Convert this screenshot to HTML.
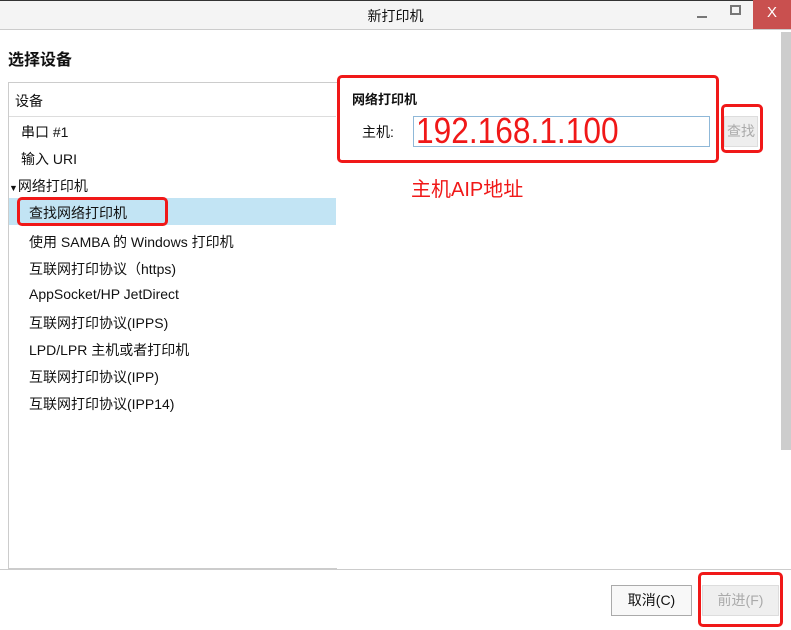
<!DOCTYPE html>
<html><head><meta charset="utf-8"><style>
*{margin:0;padding:0;box-sizing:border-box}
body{width:791px;height:630px;background:#fff;position:relative;overflow:hidden;font-family:"Liberation Sans","Noto Sans CJK SC",sans-serif;font-size:14px;color:#111}
.a{position:absolute}
.red{position:absolute;border:3px solid #f01818;border-radius:5px}
.it{position:absolute;left:21px;font-size:14px}
</style></head><body>
<div class="a" style="left:0;top:0;width:791px;height:1px;background:#333"></div>
<div class="a" style="left:0;top:1px;width:791px;height:29px;background:#f4f4f4;border-bottom:1px solid #ccc"></div>
<div class="a" style="left:0;top:6px;width:791px;text-align:center;font-size:14px">新打印机</div>
<div class="a" style="left:697px;top:16px;width:10px;height:2px;background:#777"></div>
<div class="a" style="left:730px;top:5px;width:11px;height:10px;border:2px solid #777"></div>
<div class="a" style="left:753px;top:0;width:38px;height:29px;background:#c9504f;color:#fff;text-align:center;font-size:15px;line-height:26px">X</div>
<div class="a" style="left:781px;top:32px;width:10px;height:418px;background:#cdcdcd"></div>
<div class="a" style="left:8px;top:46px;font-size:16px;font-weight:bold">选择设备</div>
<div class="a" style="left:8px;top:82px;width:329px;height:487px;border:1px solid #ccc;border-right:none"></div>
<div class="a" style="left:9px;top:116px;width:327px;height:1px;background:#ddd"></div>
<div class="a" style="left:15px;top:91px">设备</div>
<div class="it" style="top:122px">串口 #1</div>
<div class="it" style="top:149px">输入 URI</div>
<div class="a" style="left:9px;top:176px"><span style="font-size:9px">▼</span>网络打印机</div>
<div class="a" style="left:9px;top:198px;width:327px;height:27px;background:#c2e4f4"></div>
<div class="it" style="left:29px;top:203px">查找网络打印机</div>
<div class="it" style="left:29px;top:232px">使用 SAMBA 的 Windows 打印机</div>
<div class="it" style="left:29px;top:259px">互联网打印协议（https)</div>
<div class="it" style="left:29px;top:286px">AppSocket/HP JetDirect</div>
<div class="it" style="left:29px;top:313px">互联网打印协议(IPPS)</div>
<div class="it" style="left:29px;top:340px">LPD/LPR 主机或者打印机</div>
<div class="it" style="left:29px;top:367px">互联网打印协议(IPP)</div>
<div class="it" style="left:29px;top:394px">互联网打印协议(IPP14)</div>
<div class="a" style="left:352px;top:89px;font-size:13px;font-weight:bold">网络打印机</div>
<div class="a" style="left:362px;top:122px;font-size:14px">主机:</div>
<div class="a" style="left:413px;top:116px;width:297px;height:31px;border:1px solid #8fb8d8"></div>
<div class="a" style="left:416px;top:112px;color:#f01818;font-size:36px;line-height:38px;transform:scaleX(0.88);transform-origin:left">192.168.1.100</div>
<div class="a" style="left:724px;top:116px;width:34px;height:31px;background:#eee;border:1px solid #ddd;color:#aaa;font-size:14px;text-align:center;line-height:29px">查找</div>
<div class="a" style="left:411px;top:173px;color:#f01818;font-size:20px">主机AIP地址</div>
<div class="a" style="left:0;top:569px;width:791px;height:1px;background:#ccc"></div>
<div class="a" style="left:611px;top:585px;width:81px;height:31px;border:1px solid #aaa;background:#f8f8f8;text-align:center;line-height:29px">取消(C)</div>
<div class="a" style="left:702px;top:585px;width:77px;height:31px;border:1px solid #ddd;background:#efefef;color:#aaa;text-align:center;line-height:29px">前进(F)</div>
<div class="red" style="left:337px;top:75px;width:382px;height:88px"></div>
<div class="red" style="left:721px;top:104px;width:42px;height:49px"></div>
<div class="red" style="left:17px;top:197px;width:151px;height:29px"></div>
<div class="red" style="left:698px;top:572px;width:85px;height:55px"></div>
</body></html>
